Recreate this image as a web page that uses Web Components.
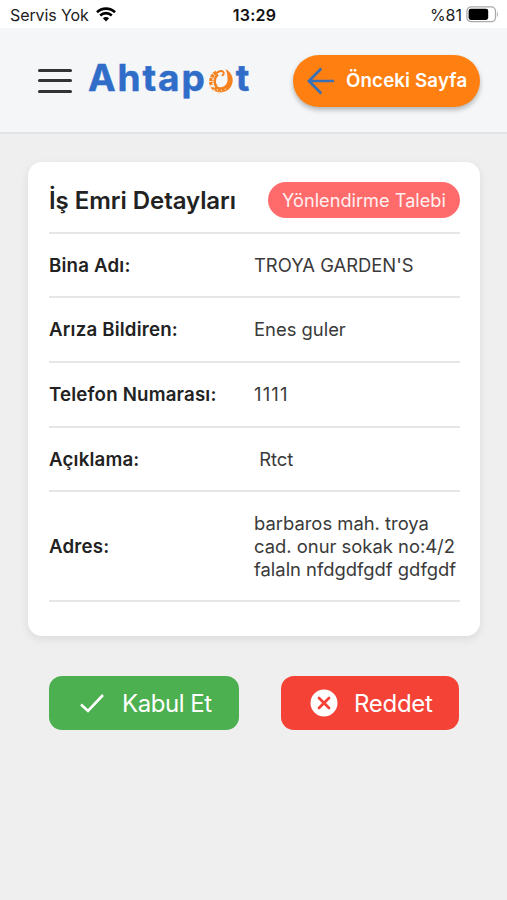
<!DOCTYPE html>
<html lang="tr"><head><meta charset="utf-8"><title>Ahtapot</title>
<style>
body{margin:0;background:#efefef;font-family:Inter,"Liberation Sans",sans-serif;color:#222}
</style></head><body>
<app-screen></app-screen>
<script>
const define=(name,html)=>customElements.define(name,class extends HTMLElement{
  constructor(){super();this.attachShadow({mode:'open'}).innerHTML=html;}
});
define('status-bar',`<style>
:host{display:grid;grid-template-columns:1fr auto 1fr;align-items:center;height:28px;padding:2px 8px 0 10px;box-sizing:border-box;background:#fff;color:#1c1c1c;font-size:16px;line-height:26px}
div{display:flex;align-items:center;white-space:nowrap}
.l{gap:7px;letter-spacing:-.1px}.r{justify-content:flex-end;gap:4px}
b{font-weight:600;color:#111;letter-spacing:.3px}
svg{margin-top:-1px}
</style><div class="l"><span>Servis Yok</span><svg width="20" height="15" viewBox="0 0 20 15" fill="none" stroke="#000" stroke-width="2.7"><path d="M1 5.2A13.2 13.2 0 0 1 19 5.2M4.2 8.5a8.5 8.5 0 0 1 11.6 0"/><path d="M6.9 11.3a4.4 4.4 0 0 1 6.2 0L10 14.6z" fill="#000" stroke="none"/></svg></div><b>13:29</b>
<div class="r"><span>%81</span><svg width="33" height="17" viewBox="0 0 33 17"><rect x=".9" y=".9" width="28.6" height="14.8" rx="4.2" fill="#fff" stroke="#aaa" stroke-width="1.3"/><rect x="2.6" y="2.7" width="19.6" height="11.2" rx="2.3"/><path d="M31 5.7q2 2.6 0 5.2z" fill="#aaa"/></svg></div>`);

define('app-logo',`<style>
:host{display:flex;align-items:flex-start;margin-left:-1px;color:#2f6dc9;font:700 37px/40px Inter,sans-serif;-webkit-text-stroke:.5px #2f6dc9}
.a{letter-spacing:1.9px}
svg{margin:10.500px 2px 0 1px}
</style><span class="a">Ahtap</span><svg width="26" height="27" viewBox="0 0 26 27" fill="none"><path d="M17.500 1A12.300 12.300 0 1 1 2.500 19.500L9 18.200A7 7 0 0 0 19.500 12.500C19.700 8 19 4 17.500 1Z" fill="#f5821f"/><path d="M8.500 4.200C3.500 7 2 12 3.500 17.500" stroke="#f5821f" stroke-width="3.600" stroke-dasharray="3.200 .7"/><path d="M10 6.500C6.300 9 5.300 14.500 8.500 19" stroke="#f5821f" stroke-width="2.600"/><path d="M7.500 5.700Q14 .8 15.700 4.700q.4 2.600-2 2.600" stroke="#f5821f" stroke-width="1.900"/><path d="M4.800 11.500v.1M4.700 15.500v.1M6.300 19.300v.1M9.500 21.800v.1M13.500 22.500v.1M17.300 21.200v.1M1.300 19l1.800-.7M5 23.700l1.300-1.800M10.500 26.300l.7-2" stroke="#fbe3cf" stroke-width="1.400" stroke-linecap="round"/></svg><span>t</span>`);

define('back-button',`<style>
:host{display:flex;align-items:center;box-sizing:border-box;width:187px;height:52px;padding-left:14px;gap:11px;border-radius:26px;background:#ff7f11;color:#fff;font-weight:600;font-size:18.7px;letter-spacing:.15px;box-shadow:0 3px 5px #0004;white-space:nowrap}
</style><svg width="28" height="28" viewBox="0 0 28 28" fill="none" stroke="#3970b8" stroke-width="2.700"><path d="M27 14H2M14.300 1.500L1.900 14l12.400 12.500"/></svg><span><slot></slot></span>`);

define('app-header',`<style>
:host{display:flex;align-items:center;box-sizing:border-box;height:106px;padding:0 27px 0 38px;background:#f4f6f8;border-bottom:2px solid #e2e3e4}
.menu{width:34px;height:24px;display:flex;flex-direction:column;justify-content:space-between;margin:1px 17px 0 0}
.menu i{height:3px;border-radius:2px;background:#333}
back-button{margin-left:auto;margin-top:1px}
app-logo{margin-bottom:5px}
</style><div class="menu"><i></i><i></i><i></i></div><app-logo></app-logo><back-button>Önceki Sayfa</back-button>`);

define('detail-row',`<style>
:host{display:grid;grid-template-columns:205px 1fr;align-items:center;box-sizing:border-box;height:64.700px;padding-top:2px;border-bottom:2px solid #e6e6e6;font-size:18.400px;line-height:22.600px}
:host([tall]){height:110px}
.k{font-weight:600;font-size:18.700px;letter-spacing:.18px;color:#222}.v{color:#3a3a3a;white-space:pre;margin-bottom:2px}
:host([digits]) .v{letter-spacing:1.150px}
</style><span class="k"><slot name="label"></slot></span><span class="v"><slot></slot></span>`);

define('work-card',`<style>
:host{display:block;box-sizing:border-box;margin:27.500px 27px 0 28px;height:474px;padding:20px 20px 0 21px;border-radius:14px;background:#fff;box-shadow:0 3px 10px #00000016}
header{display:flex;justify-content:space-between;align-items:flex-start;height:52px;box-sizing:border-box;border-bottom:2px solid #e6e6e6}
h1{margin:0;font-size:24px;font-weight:600;line-height:38px;color:#222;white-space:nowrap;letter-spacing:-.05px}
.tag{box-sizing:border-box;width:192px;height:36px;border-radius:18px;background:#ff6b6b;color:#fff0f0;font-size:18.200px;line-height:37px;text-align:center;white-space:nowrap}
</style><header><h1><slot name="title"></slot></h1><span class="tag"><slot name="tag"></slot></span></header><slot></slot>`);

define('action-button',`<style>
:host{display:flex;align-items:center;box-sizing:border-box;width:190px;height:54px;border-radius:13px;background:#4caf50;color:#fff;font-size:24px;letter-spacing:-.45px;padding:1px 0 0 29px;gap:15px;white-space:nowrap}
:host([kind=reject]){width:178px;background:#f44336;letter-spacing:-.3px}
</style><slot name="icon"></slot><span><slot></slot></span>`);

define('app-screen',`<style>
:host{display:block;height:900px;overflow:hidden;background:#efefef}
footer{display:flex;justify-content:space-between;padding:40.500px 48px 0 49px}
</style><status-bar></status-bar><app-header></app-header>
<work-card><span slot="title">İş Emri Detayları</span><span slot="tag">Yönlendirme Talebi</span>
<detail-row><span slot="label">Bina Adı:</span>TROYA GARDEN'S</detail-row>
<detail-row><span slot="label">Arıza Bildiren:</span>Enes guler</detail-row>
<detail-row digits><span slot="label">Telefon Numarası:</span>1111</detail-row>
<detail-row><span slot="label">Açıklama:</span> Rtct</detail-row>
<detail-row tall><span slot="label">Adres:</span>barbaros mah. troya
cad. onur sokak no:4/2
falaln nfdgdfgdf gdfgdf</detail-row></work-card>
<footer><action-button><svg slot="icon" width="29" height="29" viewBox="0 0 29 29" fill="none" stroke="#fff" stroke-width="2.600"><path d="M3 15.500l7 6.500L25 6"/></svg>Kabul Et</action-button>
<action-button kind="reject"><svg slot="icon" width="29" height="29" viewBox="0 0 29 29"><circle cx="14" cy="14" r="13.500" fill="#fff"/><path d="M9 9l10 10M19 9L9 19" stroke="#f44336" stroke-width="2.800" stroke-linecap="round"/></svg>Reddet</action-button></footer>`);
</script></body></html>
